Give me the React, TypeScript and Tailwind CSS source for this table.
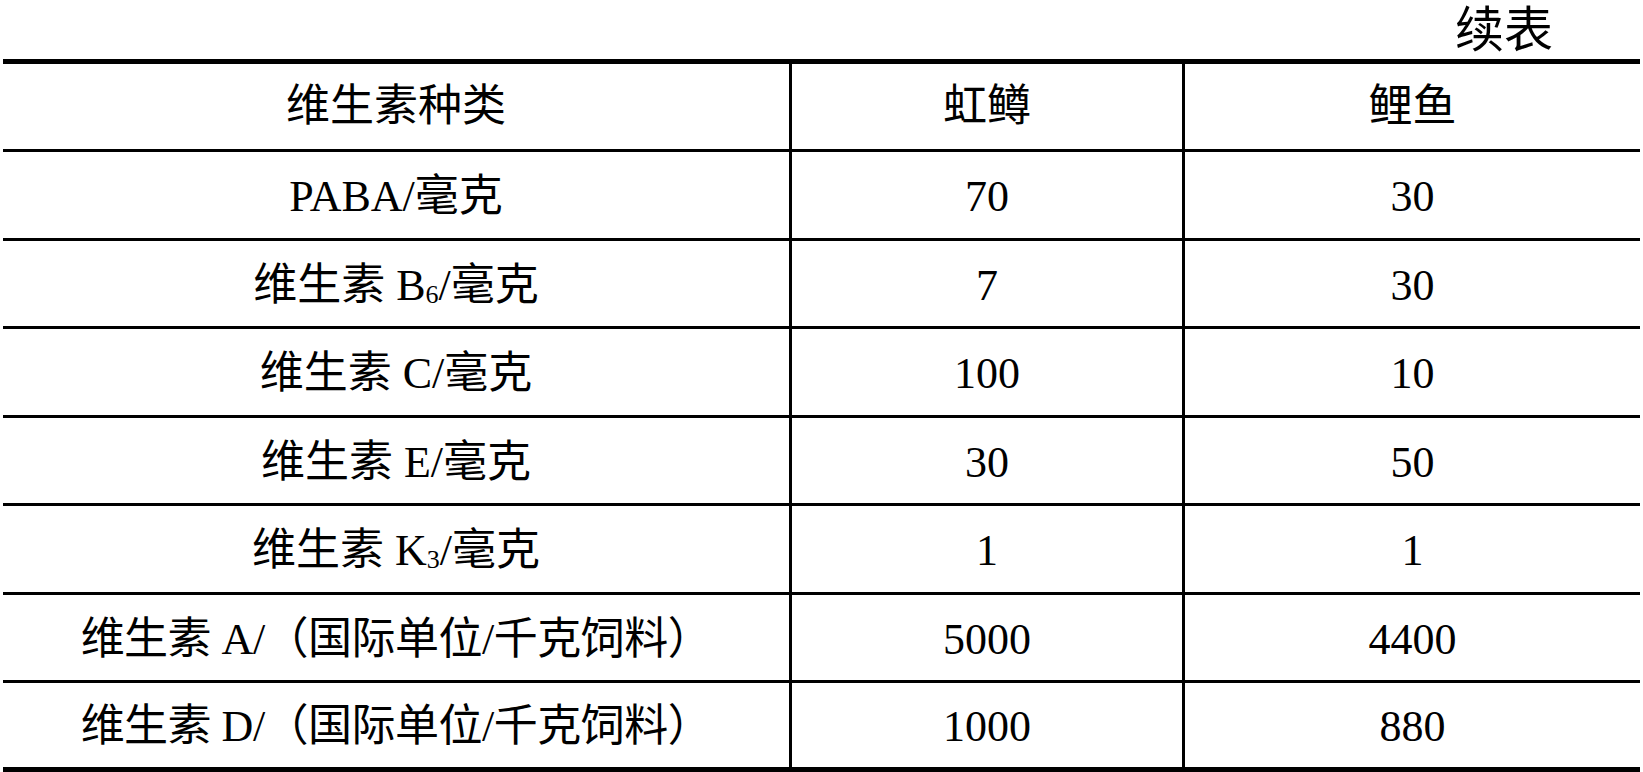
const FONT = "font-['Liberation_Serif','Noto_Sans_CJK_SC',serif]"

type Row = { name: React.ReactNode; trout: string; carp: string; tight?: boolean }

const rows: Row[] = [
  { name: "PABA/毫克", trout: "70", carp: "30" },
  {
    name: (
      <>
        维生素 B<span className="text-[26px] align-[-3px]">6</span>/毫克
      </>
    ),
    trout: "7",
    carp: "30",
  },
  { name: "维生素 C/毫克", trout: "100", carp: "10" },
  { name: "维生素 E/毫克", trout: "30", carp: "50" },
  {
    name: (
      <>
        维生素 K<span className="text-[26px] align-[-3px]">3</span>/毫克
      </>
    ),
    trout: "1",
    carp: "1",
  },
  { name: "维生素 A/（国际单位/千克饲料）", trout: "5000", carp: "4400", tight: true },
  { name: "维生素 D/（国际单位/千克饲料）", trout: "1000", carp: "880", tight: true },
]

// row heights alternate so the rules land on the same pixels as the scan
const heights = ["h-[89px]", "h-[88px]", "h-[89px]", "h-[88px]", "h-[89px]", "h-[88px]", "h-[89px]"]

function Cell({ children, last, border }: { children: React.ReactNode; last?: boolean; border: string }) {
  return (
    <div
      className={`flex items-center justify-center border-black ${border} ${
        last ? "" : "border-r-[3px]"
      }`}
    >
      {children}
    </div>
  )
}

export default function App() {
  return (
    <div className={`w-[1643px] h-[772px] bg-white text-black overflow-hidden ${FONT}`}>
      <div className="h-[59px] flex items-center justify-end pr-[90px] pt-[2px] text-[49px] leading-none">
        续表
      </div>
      <div className="ml-[3px] w-[1637px] border-t-[5px] border-black text-[44px] leading-none">
        <div className="grid grid-cols-[789px_393px_455px] h-[88px]">
          <Cell border="border-b-[3px]">维生素种类</Cell>
          <Cell border="border-b-[3px]">虹鳟</Cell>
          <Cell border="border-b-[3px]" last>
            鲤鱼
          </Cell>
        </div>
        {rows.map((r, i) => {
          const border = i === rows.length - 1 ? "border-b-[5px]" : "border-b-[3px]"
          return (
            <div key={i} className={`grid grid-cols-[789px_393px_455px] ${heights[i]}`}>
              <Cell border={border}>
                <span className={r.tight ? "pt-[4px] tracking-[-0.5px]" : "pt-[4px]"}>{r.name}</span>
              </Cell>
              <Cell border={border}>
                <span className="pt-[4px]">{r.trout}</span>
              </Cell>
              <Cell border={border} last>
                <span className="pt-[4px]">{r.carp}</span>
              </Cell>
            </div>
          )
        })}
      </div>
    </div>
  )
}
